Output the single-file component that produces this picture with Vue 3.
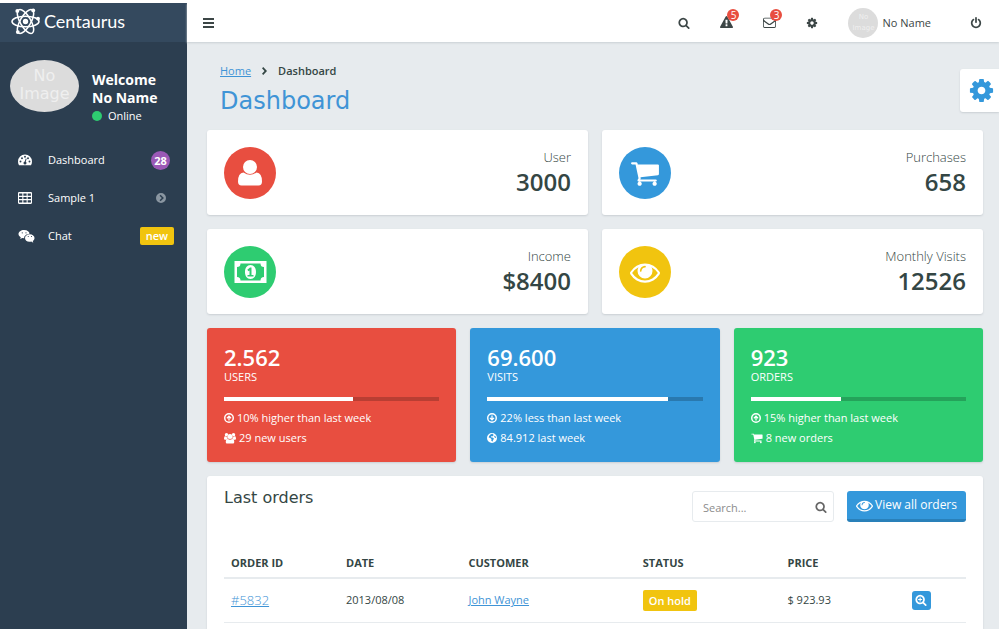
<script setup>
import { ref } from 'vue'

const query = ref('')

const icons = {
  search: { box: '0 0 1792 1792', d: 'M1216 832q0-185-131.5-316.5T768 384 451.5 515.5 320 832t131.5 316.5T768 1280t316.5-131.5T1216 832zm512 832q0 52-38 90t-90 38q-54 0-90-38l-343-342q-179 124-399 124-143 0-273.500-55.500t-225-150-150-225T64 832t55.500-273.500 150-225 225-150T768 128t273.500 55.500 225 150 150 225T1472 832q0 220-124 399l343 343q37 37 37 90z' },
  zoomIn: { box: '0 0 1792 1792', d: 'M1216 832q0-185-131.5-316.5T768 384 451.5 515.5 320 832t131.5 316.5T768 1280t316.5-131.5T1216 832zm512 832q0 52-38 90t-90 38q-54 0-90-38l-343-342q-179 124-399 124-143 0-273.500-55.500t-225-150-150-225T64 832t55.500-273.500 150-225 225-150T768 128t273.500 55.500 225 150 150 225T1472 832q0 220-124 399l343 343q37 37 37 90zM690 530h156v224h224v156H846v224H690V910H466V754h224z' },
  eye: { box: '0 0 1792 1792', d: 'M1664 960q-152-236-381-353 61 104 61 225 0 185-131.5 316.500T896 1280t-316.500-131.500T448 832q0-121 61-225-229 117-381 353 133 205 333.500 326.500T896 1408t434.500-121.500T1664 960zM944 576q0-20-14-34t-34-14q-125 0-214.500 89.500T592 832q0 20 14 34t34 14 34-14 14-34q0-86 61-147t147-61q20 0 34-14t14-34zm848 384q0 34-20 69-140 230-376.500 368.500T896 1536t-499.500-139T20 1029Q0 994 0 960t20-69q140-229 376.500-368T896 384t499.500 139T1772 891q20 35 20 69z' },
  cog: { box: '0 0 1792 1792', d: 'M1152 896q0-106-75-181t-181-75-181 75-75 181 75 181 181 75 181-75 75-181zm512-109v222q0 12-8 23t-20 13l-185 28q-19 54-39 91 35 50 107 138 10 12 10 25t-9 23q-27 37-99 108t-94 71q-12 0-26-9l-138-108q-44 23-91 38-16 136-29 186-7 28-36 28H785q-14 0-24.500-8.500T749 1636l-28-184q-49-16-90-37l-141 107q-10 9-25 9-14 0-25-11-126-114-165-168-7-10-7-23 0-12 8-23 15-21 51-66.500t54-70.500q-27-50-41-99l-183-27q-13-2-21-12.500t-8-23.500V785q0-12 8-23t19-13l186-28q14-46 39-92-40-57-107-138-10-12-10-24 0-10 9-23 26-36 98.500-107.500T465 263q13 0 26 10l138 107q44-23 91-38 16-136 29-186 7-28 36-28h222q14 0 24.500 8.500T1043 156l28 184q49 16 90 37l142-107q9-9 24-9 13 0 25 10 129 119 165 170 7 8 7 22 0 12-8 23-15 21-51 66.500t-54 70.500q26 50 41 98l183 28q13 2 21 12.500t8 23.500z' },
  cart: { box: '0 0 1792 1792', d: 'M704 1536q0 52-38 90t-90 38-90-38-38-90 38-90 90-38 90 38 38 90zm896 0q0 52-38 90t-90 38-90-38-38-90 38-90 90-38 90 38 38 90zm128-1088v512q0 24-16.500 42.500t-40.500 21.500l-1044 122q13 60 13 70 0 16-24 64h920q26 0 45 19t19 45-19 45-45 19H512q-26 0-45-19t-19-45q0-11 8-31.500t16-36 21.500-40T509 1204L332 384H128q-26 0-45-19t-19-45 19-45 45-19h256q16 0 28.500 6.500T432 278t13 24.500 8 26 5.500 29.500 4.500 26h1201q26 0 45 19t19 45z' },
  power: { box: '0 0 1792 1792', d: 'M1664 896q0 156-61 298t-164 245-245 164-298 61-298-61-245-164-164-245-61-298q0-182 80.500-343T435 283q43-32 95.500-25t83.500 50q32 42 24.500 94.500T589 487q-98 74-151.500 181T384 896q0 104 40.500 198.500T534 1258t163.500 109.500T896 1408t198.500-40.500T1258 1258t109.500-163.500T1408 896q0-121-53.500-228T1203 487q-42-32-49.500-84.500T1178 308q31-43 84-50t95 25q146 109 226.500 270t80.500 343zM1024 128v640q0 52-38 90t-90 38-90-38-38-90V128q0-52 38-90t90-38 90 38 38 90z' },
  user: { box: '0 0 24 26', d: 'M12 0a7 7 0 0 1 7 7a7 7 0 0 1-14 0a7 7 0 0 1 7-7zM5.500 12.500Q12 17 18.500 12.500Q24 13 24 21.500Q24 25.500 20.500 25.500H3.500Q0 25.500 0 21.500Q0 13 5.500 12.500z' },
  users: { box: '0 0 24 22', d: 'M5 1a3.500 3.500 0 1 1 0 7a3.500 3.500 0 0 1 0-7zM19 1a3.500 3.500 0 1 1 0 7a3.500 3.500 0 0 1 0-7zM12 3a5 5 0 1 1 0 10a5 5 0 0 1 0-10zM2 7Q4 10 6.500 9Q6.500 11 7.500 12.500Q5.500 12.500 4.500 14.500H2Q0 14.500 0 12.500Q0 8 2 7zM22 7Q20 10 17.500 9Q17.500 11 16.500 12.500Q18.500 12.500 19.500 14.500H22Q24 14.500 24 12.500Q24 8 22 7zM7.500 13Q12 16 16.500 13Q20.500 13 20.500 19Q20.500 22 18 22H6Q3.500 22 3.500 19Q3.500 13 7.500 13z' },
  warning: { box: '0 0 1792 1792', d: 'M1024 1375v-190q0-14-9.500-23.500T992 1152H800q-13 0-22.500 9.500T768 1185v190q0 14 9.500 23.500t22.500 9.500h192q13 0 22.500-9.500t9.500-23.500zm-2-374l18-459q0-12-10-19-13-11-24-11H786q-11 0-24 11-10 7-10 21l17 457q0 10 10 16.500t24 6.500h185q14 0 23.500-6.500t10.500-16.500zm-14-934l768 1408q35 63-2 126-17 29-46.500 46t-63.500 17H128q-34 0-63.500-17T18 1601q-37-63-2-126L784 67q17-31 47-49t65-18 65 18 47 49z' },
  mail: { box: '0 0 24 22', d: 'M3 2H21Q24 2 24 5V18Q24 21 21 21H3Q0 21 0 18V5Q0 2 3 2zM1.500 9V18Q1.500 19.500 3 19.500H21Q22.500 19.500 22.500 18V9L15 14.500Q12 17 9 14.500zM3 3.500Q1.500 3.500 1.500 5Q1.500 6.500 4 8L10.500 13Q12 14.200 13.500 13L20 8Q22.500 6.500 22.500 5Q22.500 3.500 21 3.500z' },
  bars: { box: '0 0 11 10', d: 'M0 0H11V2H0zM0 4H11V6H0zM0 8H11V10H0z' },
  gauge: { box: '0 0 28 22', d: 'M14 0A14 14 0 0 1 28 14Q28 18 26 21.500H2Q0 18 0 14A14 14 0 0 1 14 0zM5 12.200a1.900 1.900 0 1 0 0 3.800a1.900 1.900 0 0 0 0-3.800zM8 5.500a1.900 1.900 0 1 0 0 3.800a1.900 1.900 0 0 0 0-3.800zM14 2.500a1.900 1.900 0 1 0 0 3.800a1.900 1.900 0 0 0 0-3.800zM20 5.500a1.900 1.900 0 1 0 0 3.800a1.900 1.900 0 0 0 0-3.800zM23 12.200a1.900 1.900 0 1 0 0 3.800a1.900 1.900 0 0 0 0-3.800zM15.500 8L13.500 14Q11 14.500 11 17A3 3 0 0 0 17 17Q17 15.500 15.500 14.500L17.300 8.500z' },
  table: { box: '0 0 26 22', d: 'M2 0H24Q26 0 26 2V20Q26 22 24 22H2Q0 22 0 20V2Q0 0 2 0zM2 2.500V7H8V2.500zM10 2.500V7H16V2.500zM18 2.500V7H24V2.500zM2 9V13H8V9zM10 9V13H16V9zM18 9V13H24V9zM2 15V19.500H8V15zM10 15V19.500H16V15zM18 15V19.500H24V15z' },
  chat: { box: '0 0 32 26', d: 'M11 0C18 0 22 3.500 22 7.500Q15 7.500 12 12.500Q11 14.500 11.500 16.500L7.500 16L3.500 18L4.500 14.500C1.500 13 0 10.500 0 8C0 3.500 5 0 11 0zM7.500 4.500a1.200 1.200 0 1 0 0 2.400a1.200 1.200 0 0 0 0-2.400zM15 4.500a1.200 1.200 0 1 0 0 2.400a1.200 1.200 0 0 0 0-2.400zM22.500 8.500C28 8.500 32 12 32 16C32 18.500 30.500 20.500 28.500 22L29.500 25.500L25.500 23.200C18 25 13 21 13 16C13 12 17 8.500 22.500 8.500zM19.500 12a1.100 1.100 0 1 0 0 2.200a1.100 1.100 0 0 0 0-2.200zM26 12a1.100 1.100 0 1 0 0 2.200a1.100 1.100 0 0 0 0-2.200z' },
  next: { box: '0 0 24 24', d: 'M12 0a12 12 0 1 1 0 24a12 12 0 0 1 0-24zM8.500 6.500L14 12L8.500 17.500L11 20L19 12L11 4z' },
  up: { box: '0 0 24 24', d: 'M12 0a12 12 0 1 1 0 24a12 12 0 0 1 0-24zM12 3.500a8.500 8.500 0 1 0 0 17a8.500 8.500 0 0 0 0-17zM12 5.500L18 11.500L16 13.500L13.500 11.500V18H10.500V11.500L8 13.500L6 11.500z' },
  down: { box: '0 0 24 24', d: 'M12 0a12 12 0 1 1 0 24a12 12 0 0 1 0-24zM12 3.500a8.500 8.500 0 1 0 0 17a8.500 8.500 0 0 0 0-17zM12 18.500L18 12.500L16 10.500L13.500 12.500V6H10.500V12.500L8 10.500L6 12.500z' },
  globe: { box: '0 0 24 24', d: 'M12 0a12 12 0 1 1 0 24a12 12 0 0 1 0-24zM13 2L9 3L5 7L4 11L8 12L11 15L10 18L13 21L15 16L17 14L13 11L9 10L10 8L14 8L16 5zM19 6L17 9L20 12L22 11z' },
  money: { box: '0 0 32 22', d: 'M0 0H32V22H0zM6 2.500Q6 6 2.500 6V16Q6 16 6 19.500H26Q26 16 29.500 16V6Q26 6 26 2.500zM16 4C19.500 4 21.500 7 21.500 11S19.500 18 16 18S10.500 15 10.500 11S12.500 4 16 4zM15.500 6.500L12.800 8.800L14 10.200L15 9.500V14H13V15.500H19V14H17V6.500z' },
  chevron: { box: '0 0 10 16', d: 'M2.500 0L10 8L2.500 16L0 13.500L5 8L0 2.500z' },
}

const nav = [
  { label: 'Dashboard', icon: 'gauge', badge: '28', kind: 'count' },
  { label: 'Sample 1', icon: 'table', badge: '', kind: 'arrow' },
  { label: 'Chat', icon: 'chat', badge: 'new', kind: 'new' },
]
const stats = [
  { label: 'User', value: '3000', icon: 'user', tone: 'red' },
  { label: 'Purchases', value: '658', icon: 'cart', tone: 'blue' },
  { label: 'Income', value: '$8400', icon: 'money', tone: 'green' },
  { label: 'Monthly Visits', value: '12526', icon: 'eye', tone: 'yellow' },
]
const tiles = [
  { value: '2.562', label: 'USERS', tone: 'red', progress: 60, lines: [['up', '10% higher than last week'], ['users', '29 new users']] },
  { value: '69.600', label: 'VISITS', tone: 'blue', progress: 84, lines: [['down', '22% less than last week'], ['globe', '84.912 last week']] },
  { value: '923', label: 'ORDERS', tone: 'green', progress: 42, lines: [['up', '15% higher than last week'], ['cart', '8 new orders']] },
]
const orders = [{ id: '#5832', date: '2013/08/08', customer: 'John Wayne', status: 'On hold', price: '$ 923.93' }]
</script>

<template>
  <div class="page">
    <aside class="sidebar">
      <a class="brand" href="#">
        <svg class="logo" viewBox="0 0 32 28" aria-hidden="true">
          <g fill="none" stroke="#fff" stroke-width="1.600">
            <ellipse cx="16" cy="14" rx="14" ry="5.500" />
            <ellipse cx="16" cy="14" rx="14" ry="5.500" transform="rotate(60 16 14)" />
            <ellipse cx="16" cy="14" rx="14" ry="5.500" transform="rotate(120 16 14)" />
          </g>
          <g fill="#fff">
            <circle cx="16" cy="14" r="2.800" />
            <circle cx="7.500" cy="3" r="2" />
            <circle cx="24" cy="2.500" r="2" />
            <circle cx="8" cy="25" r="2" />
            <circle cx="29" cy="11" r="2" />
          </g>
        </svg>
        <span>Centaurus</span>
      </a>
      <div class="profile">
        <span class="avatar avatar-lg">No<br>Image</span>
        <div>
          <strong class="welcome">Welcome<br>No Name</strong>
          <span class="status"><i class="dot"></i>Online</span>
        </div>
      </div>
      <nav class="menu">
        <a v-for="item in nav" :key="item.label" href="#" class="menu-item">
          <svg class="menu-icon" :class="item.icon" :viewBox="icons[item.icon].box"><path :d="icons[item.icon].d" /></svg>
          <span class="menu-label">{{ item.label }}</span>
          <span class="menu-end" :class="item.kind">
            <svg v-if="item.kind === 'arrow'" class="icon-10" :viewBox="icons.next.box"><path :d="icons.next.d" /></svg>
            <template v-else>{{ item.badge }}</template>
          </span>
        </a>
      </nav>
    </aside>

    <div class="body">
      <header class="topbar">
        <button class="tool" type="button" aria-label="Toggle menu">
          <svg class="icon-bars" :viewBox="icons.bars.box"><path :d="icons.bars.d" /></svg>
        </button>
        <div class="tools">
          <button class="tool" type="button" aria-label="Search"><svg class="icon-12" :viewBox="icons.search.box"><path :d="icons.search.d" /></svg></button>
          <button class="tool" type="button" aria-label="Alerts"><svg class="icon-13" :viewBox="icons.warning.box"><path :d="icons.warning.d" /></svg><span class="bubble">5</span></button>
          <button class="tool" type="button" aria-label="Messages"><svg class="icon-13" :viewBox="icons.mail.box"><path :d="icons.mail.d" /></svg><span class="bubble">3</span></button>
          <button class="tool" type="button" aria-label="Settings"><svg class="icon-12" :viewBox="icons.cog.box"><path :d="icons.cog.d" /></svg></button>
        </div>
        <a class="account" href="#"><span class="avatar avatar-sm">No<br>Image</span>No Name</a>
        <button class="tool" type="button" aria-label="Log out"><svg class="icon-12" :viewBox="icons.power.box"><path :d="icons.power.d" /></svg></button>
      </header>

      <button class="config" type="button" aria-label="Layout options"><svg class="config-icon" :viewBox="icons.cog.box"><path :d="icons.cog.d" /></svg></button>

      <main class="content">
        <div class="heading">
          <div class="crumbs">
            <a href="#">Home</a>
            <svg class="crumb-arrow" :viewBox="icons.chevron.box"><path :d="icons.chevron.d" /></svg>
            <span>Dashboard</span>
          </div>
          <h1>Dashboard</h1>
        </div>

        <section class="stats">
          <article v-for="s in stats" :key="s.label" class="card stat">
            <span class="disc" :class="s.tone"><svg class="disc-icon" :class="'disc-' + s.icon" :viewBox="icons[s.icon].box"><path :d="icons[s.icon].d" /></svg></span>
            <div class="stat-text">
              <span class="stat-label">{{ s.label }}</span>
              <span class="stat-value">{{ s.value }}</span>
            </div>
          </article>
        </section>

        <section class="tiles">
          <article v-for="t in tiles" :key="t.label" class="tile" :class="t.tone">
            <span class="tile-value">{{ t.value }}</span>
            <span class="tile-label">{{ t.label }}</span>
            <div class="track"><div class="fill" :style="{ width: t.progress + '%' }"></div></div>
            <p v-for="[icon, text] in t.lines" :key="text" class="tile-line">
              <svg class="tile-icon" :class="'tile-' + icon" :viewBox="icons[icon].box"><path :d="icons[icon].d" /></svg>{{ text }}
            </p>
          </article>
        </section>

        <section class="card orders">
          <div class="orders-head">
            <h2>Last orders</h2>
            <div class="search">
              <input v-model="query" type="text" placeholder="Search..." aria-label="Search orders">
              <svg class="icon-12" :viewBox="icons.search.box"><path :d="icons.search.d" /></svg>
            </div>
            <button class="primary" type="button"><svg class="primary-icon" :viewBox="icons.eye.box"><path :d="icons.eye.d" /></svg>View all orders</button>
          </div>
          <table>
            <colgroup><col class="c-id"><col class="c-date"><col class="c-customer"><col class="c-status"><col class="c-price"><col></colgroup>
            <thead>
              <tr><th>ORDER ID</th><th>DATE</th><th>CUSTOMER</th><th>STATUS</th><th>PRICE</th><th aria-label="Actions"></th></tr>
            </thead>
            <tbody>
              <tr v-for="o in orders" :key="o.id">
                <td><a class="order-link" href="#">{{ o.id }}</a></td>
                <td>{{ o.date }}</td>
                <td><a href="#">{{ o.customer }}</a></td>
                <td><span class="label">{{ o.status }}</span></td>
                <td>{{ o.price }}</td>
                <td class="action"><button type="button" class="view" aria-label="View order"><svg class="icon-12" :viewBox="icons.zoomIn.box"><path :d="icons.zoomIn.d" /></svg></button></td>
              </tr>
            </tbody>
          </table>
        </section>
      </main>
    </div>
  </div>
</template>

<style>
body {
  margin: 0;
  background: #e7ebee;
}
</style>

<style scoped>
* { box-sizing: border-box; }
svg { display: block; flex: none; fill: currentColor; fill-rule: evenodd; }
button { border: 0; padding: 0; background: none; font: inherit; color: inherit; cursor: pointer; }
a { color: #3f94d6; }

.page {
  display: flex;
  height: 100vh;
  border-top: 3px solid #fff;
  overflow: hidden;
  font: 11px/18px "Open Sans", "Noto Sans", sans-serif;
  color: #344644;
}

.icon-10 { width: 10px; height: 10px; }
.icon-bars { width: 11px; height: 10px; }
.icon-12 { width: 12px; height: 12px; }
.icon-13 { width: 13px; height: 13px; }

.red { background: #e84e40; }
.blue { background: #3498db; }
.green { background: #2ecc71; }
.yellow { background: #f1c40f; }

/* Sidebar */
.sidebar { flex: none; width: 187px; background: #2c3e50; color: #fff; }
.brand {
  display: flex;
  align-items: center;
  gap: 3px;
  height: 39px;
  padding: 0 10px 3px;
  background: #34495e;
  color: #fff;
  font: 18px/20px Lato, "Open Sans", sans-serif;
  text-decoration: none;
}
.logo { width: 31px; height: 27px; }
.profile { display: flex; gap: 13px; padding: 18px 10px 0; }
.avatar {
  flex: none;
  border-radius: 50%;
  background: #dcdcdc;
  color: #efefef;
  text-align: center;
  overflow: hidden;
  font-family: "DejaVu Sans", sans-serif;
}
.avatar-lg { width: 69px; height: 52px; padding-top: 7px; font-size: 16px; line-height: 18px; }
.avatar-sm { width: 30px; height: 30px; padding-top: 4px; font-size: 7px; line-height: 11px; }
.welcome { display: block; padding-top: 11px; font-size: 14px; line-height: 18px; }
.status { display: flex; align-items: center; gap: 6px; height: 18px; }
.dot { width: 10px; height: 10px; border-radius: 50%; background: #2ecc71; }
.menu { padding-top: 16px; }
.menu-item {
  display: flex;
  align-items: center;
  height: 38px;
  padding: 0 13px 0 18px;
  color: #fff;
  text-decoration: none;
}
.menu-icon { width: 14px; height: 12px; margin-right: 16px; }
.menu-icon.chat { width: 17px; height: 13px; margin-right: 13px; }
.menu-label { flex: 1; }
.menu-end { font-weight: 700; text-align: center; }
.count { width: 19px; height: 19px; margin-right: 4px; border-radius: 50%; background: #9b59b6; line-height: 19px; }
.arrow { margin-right: 8px; color: #8a96a1; }
.new { padding: 0 6px; border-radius: 2px; background: #f1c40f; font-weight: 600; }

/* Top bar */
.body { position: relative; display: flex; flex: 1; flex-direction: column; min-width: 0; background: #e7ebee; }
.topbar {
  display: flex;
  flex: none;
  align-items: center;
  height: 39px;
  padding: 0 17px 0 16px;
  background: #fff;
  box-shadow: 0 1px 2px #c9cfd3;
  color: #3c4646;
}
.tools { display: flex; gap: 30px; margin-left: auto; }
.tool { position: relative; display: flex; align-items: center; height: 38px; }
.bubble {
  position: absolute;
  top: 5px;
  left: 7px;
  width: 12px;
  height: 12px;
  border-radius: 50%;
  background: #e84e40;
  color: #fff;
  font-size: 10px;
  line-height: 12px;
  text-align: center;
}
.account { display: flex; align-items: center; gap: 4px; margin: 0 39px 0 30px; color: inherit; text-decoration: none; }
.config {
  position: absolute;
  top: 66px;
  right: 0;
  display: flex;
  align-items: center;
  width: 39px;
  height: 43px;
  padding-left: 8px;
  border-radius: 3px 0 0 3px;
  background: #fff;
  box-shadow: 0 1px 2px #c9cfd3;
  color: #3498db;
}
.config-icon { width: 27px; height: 27px; }

/* Content */
.content { display: flex; flex: 1; flex-direction: column; gap: 14px; min-height: 0; padding: 20px 16px 0 20px; }
.heading { padding-left: 13px; height: 54px; }
.crumbs { display: flex; align-items: center; gap: 11px; font-weight: 600; }
.crumbs a { font-weight: 400; }
.crumb-arrow { width: 5px; height: 8px; }
h1 { margin: 6px 0 0; font: 24px/30px "DejaVu Sans", sans-serif; color: #3f94d6; }
.card { border-radius: 3px; background: #fff; box-shadow: 0 1px 2px #c9cfd3; }
.stats { display: grid; grid-template-columns: 1fr 1fr; gap: 14px; }
.stat { display: flex; justify-content: space-between; height: 85px; padding: 17px; }
.disc { display: flex; align-items: center; justify-content: center; width: 52px; height: 52px; border-radius: 50%; color: #fff; }
.disc-icon { width: 32px; height: 30px; }
.disc-user { width: 24px; height: 26px; }
.disc-money { width: 33px; height: 22px; }
.stat-text { display: flex; flex-direction: column; text-align: right; }
.stat-label { font-size: 13px; font-weight: 300; line-height: 21px; }
.stat-value { font-size: 24px; font-weight: 600; line-height: 28px; }
.tiles { display: grid; grid-template-columns: repeat(3, 1fr); gap: 14px; }
.tile { height: 134px; padding: 17px 17px 0; border-radius: 3px; color: #fff; box-shadow: 0 1px 2px #c9cfd3; }
.tile-value { display: block; font-size: 22px; font-weight: 600; line-height: 24px; }
.tile-label { display: block; line-height: 16px; }
.track { height: 4px; margin: 12px 0 7px; background: rgba(0, 0, 0, 0.2); }
.fill { height: 100%; background: #fff; }
.tile-line { display: flex; align-items: center; gap: 3px; height: 20px; margin: 0; }
.tile-icon { width: 10px; height: 10px; }
.tile-users, .tile-cart { width: 12px; height: 12px; }

/* Orders */
.orders { flex: 1; min-height: 0; padding: 14px 17px 0; border-radius: 3px 3px 0 0; }
.orders-head { display: flex; align-items: flex-start; }
h2 { flex: 1; margin: 0; font: 16px/16px "DejaVu Sans", sans-serif; }
.search {
  display: flex;
  align-items: center;
  width: 142px;
  height: 31px;
  margin: 1px 13px 0 0;
  padding-right: 6px;
  border: 1px solid #e7ebee;
  border-radius: 3px;
  color: #666;
}
.search input { flex: 1; min-width: 0; padding: 2px 0 0 10px; border: 0; outline: 0; background: none; font: inherit; color: inherit; }
.search input::placeholder { color: #8c8c8c; }
.primary {
  display: flex;
  align-items: center;
  gap: 2px;
  height: 31px;
  margin-top: 1px;
  padding: 0 9px;
  border-bottom: 3px solid #2980b9;
  border-radius: 3px;
  background: #3498db;
  color: #fff;
  font-size: 12px;
}
.primary-icon { width: 17px; height: 17px; }
table { width: 100%; margin-top: 26px; border-collapse: collapse; table-layout: fixed; }
.c-id { width: 15.5%; }
.c-date { width: 16.5%; }
.c-customer { width: 23.5%; }
.c-status { width: 19.5%; }
.c-price { width: 13%; }
th { height: 30px; padding: 0 7px; border-bottom: 2px solid #e7ebee; text-align: left; font-weight: 700; }
td { height: 44px; padding: 0 7px; border-bottom: 1px solid #e7ebee; }
.order-link { font-size: 13px; font-weight: 300; }
.label { display: inline-block; height: 21px; padding: 0 6px; border-radius: 2px; background: #f1c40f; color: #fff; font-weight: 600; line-height: 21px; }
.view { display: flex; align-items: center; justify-content: center; width: 19px; height: 19px; margin: 0 auto; border-radius: 3px; background: #3498db; color: #fff; }
</style>
